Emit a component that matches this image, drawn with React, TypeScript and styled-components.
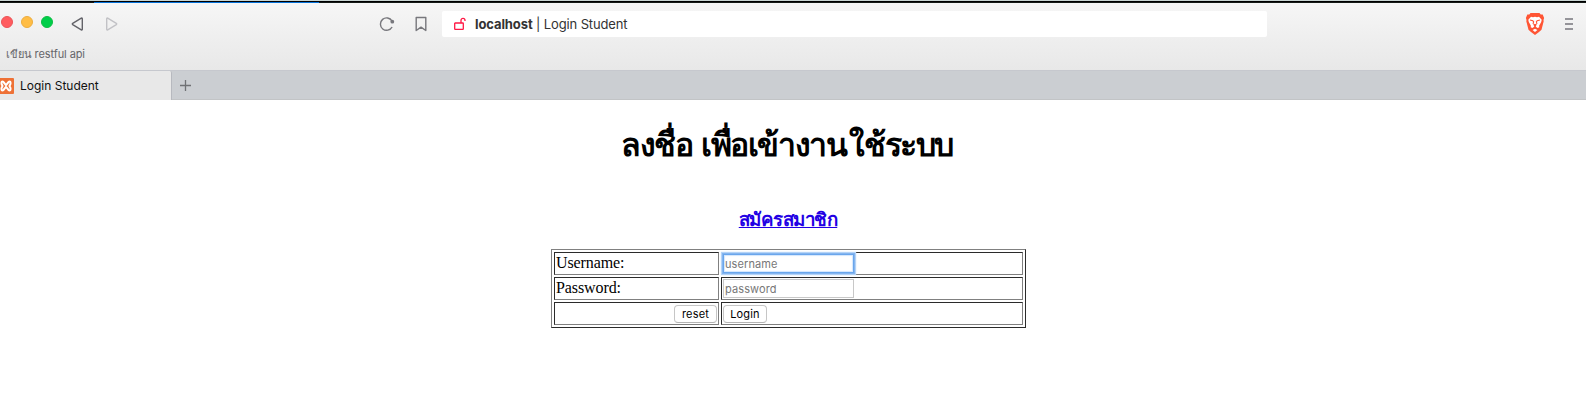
import React from "react";
import styled, { createGlobalStyle } from "styled-components";

const GlobalStyle = createGlobalStyle`
  * { box-sizing: border-box; }
  body { margin: 0; background: #fff; overflow: hidden; }
`;

const ui = `Inter, "Noto Sans", sans-serif`;

const Window = styled.div`
  width: 1586px;
  height: 407px;
  overflow: hidden;
  background: #fff;
`;

const DesktopEdge = styled.div`
  height: 3px;
  border-top: 1px solid #c9d5d3;
  border-bottom: 1px solid #161c18;
  background: #000;
`;

const BlueEdge = styled.div`
  width: 225px;
  height: 1px;
  margin: 1px 0 0 94px;
  background: #0873d9;
`;

const Chrome = styled.header`
  height: 67px;
  background: linear-gradient(#f6f6f6, #e8e8e8);
`;

const Toolbar = styled.div`
  display: flex;
  align-items: center;
  height: 42px;
`;

const Lights = styled.div`
  display: flex;
  gap: 8px;
  margin: -4px 0 0 1px;
`;

const Light = styled.span<{ $fill: string; $edge: string }>`
  width: 12px;
  height: 12px;
  border-radius: 50%;
  background: ${(p) => p.$fill};
  border: 1px solid ${(p) => p.$edge};
`;

const Icon = styled.svg<{ $left: number }>`
  display: block;
  flex: none;
  margin-left: ${(p) => p.$left}px;
`;

const AddressBar = styled.div`
  display: flex;
  align-items: center;
  width: 825px;
  height: 26px;
  margin-left: 15px;
  border-radius: 2px;
  background: #fff;
  color: #333;
  font: 13px/26px ${ui};
`;

const Address = styled.span`
  letter-spacing: -0.13px;
  white-space: pre;
`;

const Host = styled.b`
  margin-left: 9px;
  letter-spacing: -0.1px;
`;

const Bookmarks = styled.div`
  padding-left: 6px;
  font: 11px/18px ${ui};
  letter-spacing: -0.1px;
  color: #66666a;
`;

const Tabs = styled.nav`
  display: flex;
  height: 30px;
  background: #cbced2;
  border-top: 1px solid #c6c8ce;
  border-bottom: 1px solid #c2c4c6;
`;

const Tab = styled.div`
  display: flex;
  align-items: center;
  width: 172px;
  height: 29px;
  border-right: 1px solid #b7b9bf;
  border-top-right-radius: 2px;
  background: #e8e8e8;
  color: #111;
  font: 12px/28px ${ui};
`;

const TabTitle = styled.span`
  margin-left: 6px;
`;

const Page = styled.main`
  display: flex;
  flex-direction: column;
  align-items: center;
  padding-right: 9px;
  font-family: "Liberation Serif", serif;
`;

const Title = styled.h1`
  height: 48px;
  margin: 21px 0 0;
  padding-right: 3px;
  font-size: 32px;
  line-height: 48px;
  letter-spacing: -1.4px;
  word-spacing: 2px;
  white-space: nowrap;
`;

const LastWord = styled.span`
  margin-left: 3px;
`;

const Subtitle = styled.h3`
  height: 28px;
  margin: 37px 0 0;
  padding-right: 1px;
  font-size: 18.7px;
  line-height: 28px;
  letter-spacing: -0.5px;
`;

const Link = styled.a`
  color: #2200e4;
  text-decoration: underline;
`;

const FormTable = styled.table`
  width: 475px;
  height: 79px;
  margin-top: 15px;
  border: 1px solid;
  border-color: #808080 #2b2b2b #2b2b2b #808080;
  border-collapse: separate;
  border-spacing: 2px;
  table-layout: fixed;
`;

const Cell = styled.td<{ $width: number; $right?: boolean }>`
  width: ${(p) => p.$width}px;
  height: 23px;
  padding: 1px;
  border: 1px solid;
  border-color: #2b2b2b #808080 #808080 #2b2b2b;
  font-size: 16px;
  line-height: 18px;
  letter-spacing: -0.1px;
  text-align: ${(p) => (p.$right ? "right" : "left")};
  vertical-align: top;
`;

const Field = styled.input<{ $active?: boolean }>`
  display: block;
  width: 131px;
  height: 19px;
  padding: 1px 1px 0;
  border: 1px solid ${(p) => (p.$active ? "#6aa6ec" : "#c8c8c8")};
  border-radius: 0;
  outline: none;
  background: #fff;
  box-shadow: ${(p) =>
    p.$active ? "0 0 0 1px #84b5ef, 0 0 1px 2px #b4d3f7, inset 0 0 1px 1px #d3e6fc" : "none"};
  font: 11px/14px ${ui};
  letter-spacing: 0.1px;
  &::placeholder { color: #777; opacity: 1; }
`;

const PushButton = styled.button<{ $width: number }>`
  display: inline-block;
  width: ${(p) => p.$width}px;
  height: 18px;
  margin: 1px 0 0;
  padding: 0;
  border: 1px solid #c6c6c6;
  border-bottom-color: #b4b4b4;
  border-radius: 4px;
  background: #fff;
  color: #000;
  font: 11px/16px ${ui};
  letter-spacing: 0.15px;
  vertical-align: top;
`;

const BackIcon = () => (
  <Icon $left={17} width="14" height="16" viewBox="0 0 14 16" fill="none" stroke="#636369" strokeWidth="1.4" strokeLinejoin="round">
    <path d="M11.3 2.2q1-.6 1 .5v10.6q0 1.1-1 .5L2.7 8.6q-.8-.6 0-1.2z" />
  </Icon>
);

const ForwardIcon = () => (
  <Icon $left={21} width="14" height="16" viewBox="0 0 14 16" fill="none" stroke="#c2c2c6" strokeWidth="1.4" strokeLinejoin="round">
    <path d="M2.7 2.2q-1-.6-1 .5v10.6q0 1.1 1 .5l8.6-5.2q.8-.6 0-1.2z" />
  </Icon>
);

const ReloadIcon = () => (
  <Icon $left={260} width="18" height="16" viewBox="0 0 18 16" fill="none" stroke="#77777c" strokeWidth="1.4">
    <path d="M13 5A6.2 6.2 0 1 0 13.1 11" />
    <circle cx="13.3" cy="5.7" r="1.9" fill="#77777c" stroke="none" />
  </Icon>
);

const BookmarkIcon = () => (
  <Icon $left={18} width="12" height="16" viewBox="0 0 12 16" fill="none" stroke="#77777c" strokeWidth="1.4" strokeLinejoin="round">
    <path d="M1.2 1.5h9.6v13L6 11.2l-4.8 3.3z" />
  </Icon>
);

const UnlockIcon = () => (
  <Icon $left={12} width="12" height="14" viewBox="0 0 12 14" fill="none" stroke="#ff1744" strokeWidth="1.3">
    <path d="M1.2 6h7.6q.5 0 .5.5v5.200q0 .6-.5.6H1.200q-.5 0-.5-.6V6.500Q.7 6 1.200 6zM7 6V3.400a2 2 0 0 1 4 0v.6" />
  </Icon>
);

const LionIcon = () => (
  <Icon $left={258} width="20" height="24" viewBox="0 0 20 24">
    <path fill="#ff5534" d="M5.500 1h9l1.200 1.500 2-.1L19.100 6l-.6 2 .2 1.200-2.200 8.500L14 20l-4 3-4-3-2.500-2.300L1.300 9.200 1.500 8 .9 6l1.400-3.600 2 .1z" />
    <path fill="#fff" d="M6 4.800 8 5.200l2-.4 2 .4 2-.4 2.700 3-.5 2.200-2.100 3.700.2 1.500-1.700.9-1.800-1.300.2-1.200 1.200-.8-2.200-1-2.200 1 1.200.8.2 1.200-1.800 1.300-1.700-.9.2-1.500-2.100-3.700-.5-2.200zM10 16.800l2.400 1.200-2.400 2-2.400-2z" />
    <path fill="none" stroke="#ff5534" strokeWidth="1.100" d="m5 8 2.800.8.8.9-.5 2.300M15 8l-2.800.8-.8.9.5 2.300" />
  </Icon>
);

const MenuIcon = () => (
  <Icon $left={19} width="10" height="14" viewBox="0 0 10 14">
    <path d="M1 2h8M1 7h8M1 12h8" stroke="#77757c" strokeWidth="1.5" />
  </Icon>
);

const Favicon = () => (
  <Icon $left={-2} width="16" height="16" viewBox="0 0 16 16">
    <rect width="16" height="16" rx="1" fill="#ee7136" />
    <path
      fill="none"
      stroke="#fff"
      strokeWidth="2"
      strokeLinejoin="round"
      strokeLinecap="round"
      d="M3.500 5.800V4.500Q3.500 3.500 4.500 3.500Q5.500 3.500 6.200 5L8 7.200 9.800 5Q10.500 3.500 11.500 3.500Q12.500 3.500 12.500 4.500V5.800L11.500 8l1 2.200v1.300q0 1-1 1t-1.700-1.500L8 8.800 6.200 11q-.7 1.500-1.700 1.500t-1-1v-1.300L4.500 8z"
    />
  </Icon>
);

const PlusIcon = () => (
  <Icon $left={8} width="11" height="28" viewBox="0 0 11 28">
    <path d="M0 14.500h11M5.500 9v11" stroke="#6f7174" strokeWidth="1.300" />
  </Icon>
);

export default function App() {
  return (
    <Window>
      <GlobalStyle />
      <DesktopEdge><BlueEdge /></DesktopEdge>
      <Chrome>
        <Toolbar>
          <Lights>
            <Light $fill="#ff5c5f" $edge="#ec5357" />
            <Light $fill="#ffbd45" $edge="#edad3e" />
            <Light $fill="#00ce49" $edge="#0cbd43" />
          </Lights>
          <BackIcon />
          <ForwardIcon />
          <ReloadIcon />
          <BookmarkIcon />
          <AddressBar>
            <UnlockIcon />
            <Host>localhost</Host>
            <Address> | Login Student</Address>
          </AddressBar>
          <LionIcon />
          <MenuIcon />
        </Toolbar>
        <Bookmarks>เขียน restful api</Bookmarks>
      </Chrome>
      <Tabs>
        <Tab><Favicon /><TabTitle>Login Student</TabTitle></Tab>
        <PlusIcon />
      </Tabs>
      <Page>
        <Title>ลงชื่อ เพื่อเข้างาน<LastWord>ใช้ระบบ</LastWord></Title>
        <Subtitle><Link href="#">สมัครสมาชิก</Link></Subtitle>
        <FormTable>
          <tbody>
            <tr>
              <Cell $width={165}>Username:</Cell>
              <Cell $width={302}><Field $active placeholder="username" /></Cell>
            </tr>
            <tr>
              <Cell $width={165}>Password:</Cell>
              <Cell $width={302}><Field type="password" placeholder="password" /></Cell>
            </tr>
            <tr>
              <Cell $width={165} $right><PushButton $width={43}>reset</PushButton></Cell>
              <Cell $width={302}><PushButton $width={44}>Login</PushButton></Cell>
            </tr>
          </tbody>
        </FormTable>
      </Page>
    </Window>
  );
}
